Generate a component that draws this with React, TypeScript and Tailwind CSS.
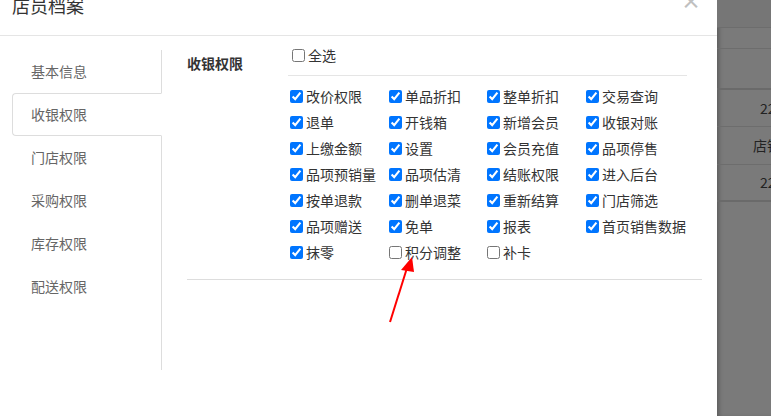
import React from "react";

const items: [string, boolean][] = [
  ["改价权限", true], ["单品折扣", true], ["整单折扣", true], ["交易查询", true],
  ["退单", true], ["开钱箱", true], ["新增会员", true], ["收银对账", true],
  ["上缴金额", true], ["设置", true], ["会员充值", true], ["品项停售", true],
  ["品项预销量", true], ["品项估清", true], ["结账权限", true], ["进入后台", true],
  ["按单退款", true], ["删单退菜", true], ["重新结算", true], ["门店筛选", true],
  ["品项赠送", true], ["免单", true], ["报表", true], ["首页销售数据", true],
  ["抹零", true], ["积分调整", false], ["补卡", false],
];

const tabs = ["基本信息", "收银权限", "门店权限", "采购权限", "库存权限", "配送权限"];

function Check({ label, checked }: { label: string; checked: boolean }) {
  return (
    <label className="flex items-center gap-[3px] h-[26px] text-[14px] text-[#333]">
      <input type="checkbox" defaultChecked={checked} className="m-0 w-[13px] h-[13px]" />
      <span>{label}</span>
    </label>
  );
}

export default function App() {
  return (
    <div
      className="flex w-[771px] h-[416px] overflow-hidden bg-[#7a7a7a]"
      style={{ fontFamily: '"Noto Sans CJK SC", "Noto Sans", sans-serif' }}
    >
      <div className="relative w-[717px] h-full bg-white flex flex-col shrink-0">
        <div className="h-[36px] border-b border-[#e5e5e5] pl-[12px] shrink-0">
          <div className="mt-[-4px] text-[18px] leading-[18px] text-[#333]">店员档案</div>
        </div>
        <div className="absolute right-[16px] top-[-9px] text-[20px] leading-[20px] font-bold text-[#c0c0c0]">×</div>
        <div className="flex flex-1">
          <div className="w-[162px] shrink-0 pl-[12px] pt-[14px] flex flex-col">
            <div className="flex flex-col h-[320px]">
              {tabs.map((t, i) => (
                <div
                  key={t}
                  className={
                    i === 1
                      ? "h-[43px] flex items-center pl-[18px] text-[14px] text-[#666] border border-[#ddd] border-r-transparent rounded-l-[4px]"
                      : "h-[43px] flex items-center pl-[19px] text-[14px] text-[#666] border-r border-[#ddd]"
                  }
                >
                  {t}
                </div>
              ))}
              <div className="flex-1 border-r border-[#ddd]" />
            </div>
          </div>
          <div className="flex-1 pl-[25px] pr-[15px] pt-[14px]">
            <div className="flex border-b border-[#ddd] pb-[14px]">
              <div className="w-[101px] shrink-0 pt-[1px] text-[14px] font-bold text-[#333] leading-[24px]">收银权限</div>
              <div className="w-[399px]">
                <div className="h-[26px] flex items-center pl-[4px] border-b border-[#e5e5e5] mb-[7px]">
                  <div className="mt-[-14px]">
                    <Check label="全选" checked={false} />
                  </div>
                </div>
                <div className="grid grid-cols-[99px_98px_99px_auto] pl-[2px]">
                  {items.map(([l, c]) => (
                    <Check key={l} label={l} checked={c} />
                  ))}
                </div>
              </div>
            </div>
          </div>
        </div>
        <svg className="absolute left-0 top-0 pointer-events-none" width="717" height="416">
          <line x1="390" y1="322" x2="407" y2="268" stroke="#ff0000" strokeWidth="2" />
          <polygon points="412,257 401,270 414,272" fill="#ff0000" />
        </svg>
      </div>
      <div className="flex-1 flex flex-col text-[14px] text-[#222] shadow-[inset_4px_0_4px_-2px_rgba(0,0,0,0.25)]">
        <div className="h-[28px] border-b border-[#6d6d6d] bg-[#767676]" />
        <div className="h-[21px] border-b border-[#6d6d6d]" />
        <div className="h-[41px] border-b-2 border-[#6a6a6a]" />
        <div className="h-[37px] border-b border-[#6d6d6d] flex items-center pl-[43px] whitespace-nowrap overflow-hidden">220</div>
        <div className="h-[38px] border-b border-[#6d6d6d] flex items-center pl-[36px] whitespace-nowrap overflow-hidden">店铺</div>
        <div className="h-[37px] border-b-2 border-[#6a6a6a] flex items-center pl-[43px] whitespace-nowrap overflow-hidden">220</div>
        <div className="flex-1" />
      </div>
    </div>
  );
}
